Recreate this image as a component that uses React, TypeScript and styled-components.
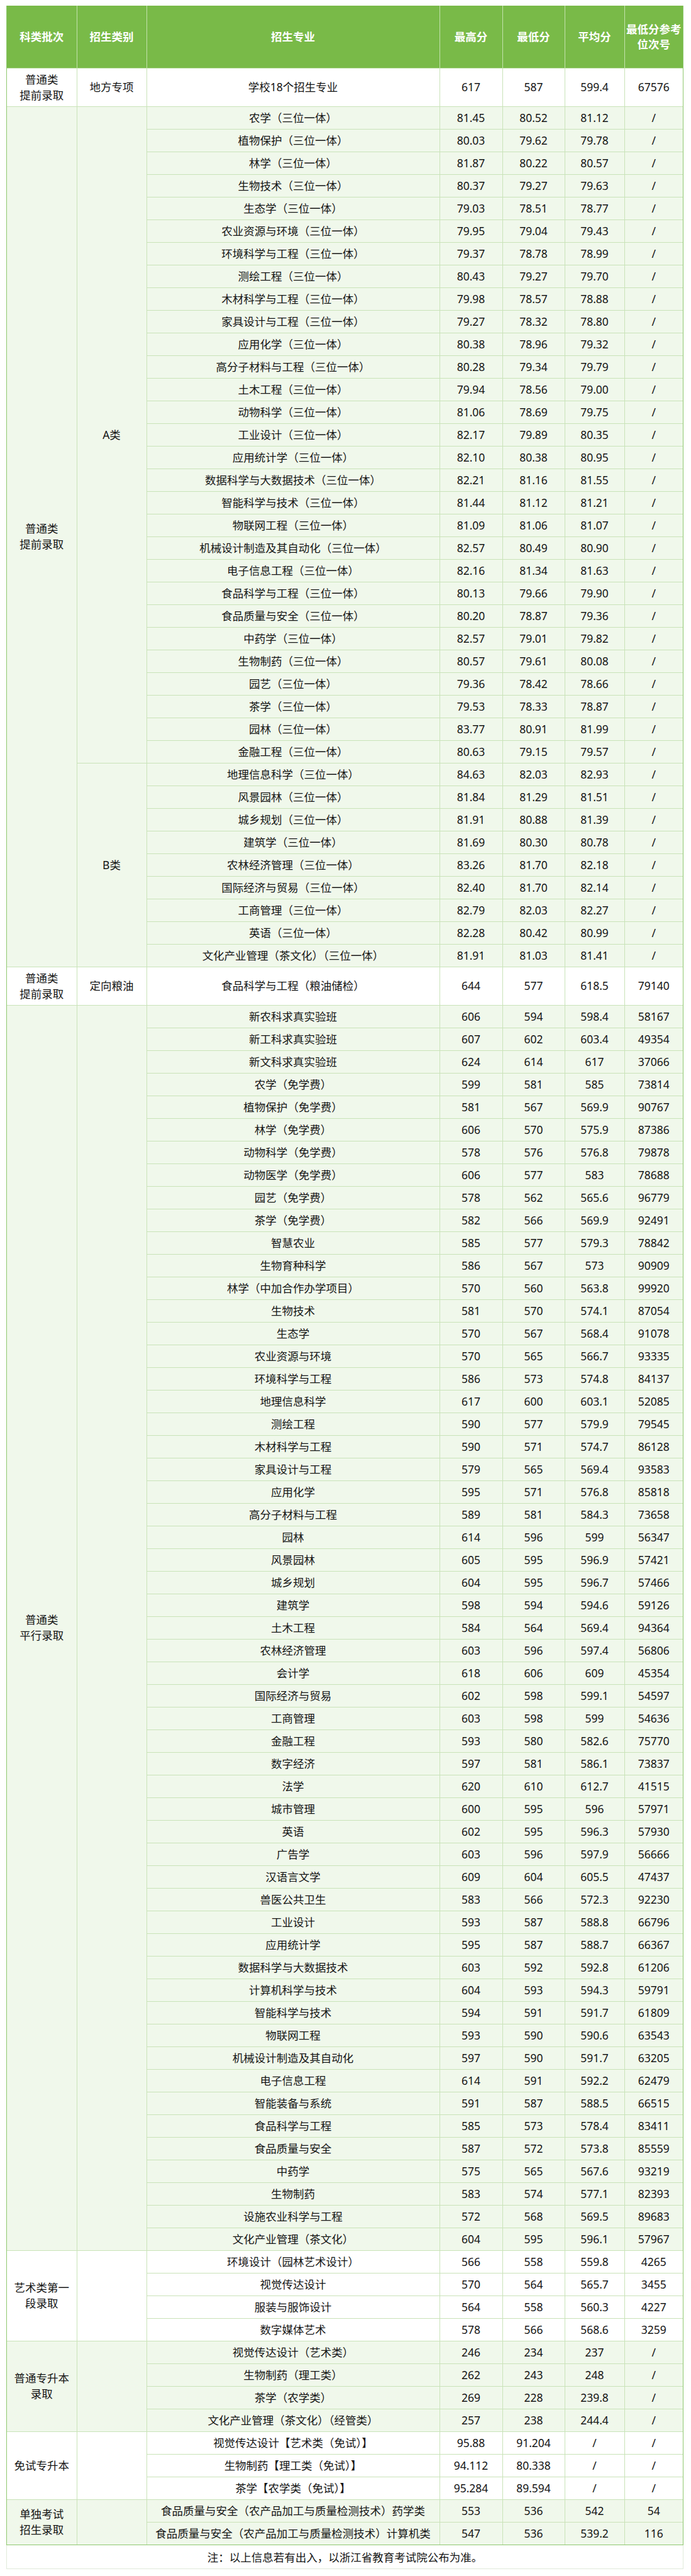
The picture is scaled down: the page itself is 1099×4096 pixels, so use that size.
import React from 'react';
import styled, { createGlobalStyle } from 'styled-components';

type Row = [string, string, string, string, string];

type Sub = {
  label: string;
  rows: Row[];
};

type Group = {
  batch: string[];
  subs: Sub[];
};

const T = '（三位一体）';

// [专业, 最高分, 最低分, 平均分, 位次号]
const aRows: Row[] = [
  ['农学' + T, '81.45', '80.52', '81.12', '/'],
  ['植物保护' + T, '80.03', '79.62', '79.78', '/'],
  ['林学' + T, '81.87', '80.22', '80.57', '/'],
  ['生物技术' + T, '80.37', '79.27', '79.63', '/'],
  ['生态学' + T, '79.03', '78.51', '78.77', '/'],
  ['农业资源与环境' + T, '79.95', '79.04', '79.43', '/'],
  ['环境科学与工程' + T, '79.37', '78.78', '78.99', '/'],
  ['测绘工程' + T, '80.43', '79.27', '79.70', '/'],
  ['木材科学与工程' + T, '79.98', '78.57', '78.88', '/'],
  ['家具设计与工程' + T, '79.27', '78.32', '78.80', '/'],
  ['应用化学' + T, '80.38', '78.96', '79.32', '/'],
  ['高分子材料与工程' + T, '80.28', '79.34', '79.79', '/'],
  ['土木工程' + T, '79.94', '78.56', '79.00', '/'],
  ['动物科学' + T, '81.06', '78.69', '79.75', '/'],
  ['工业设计' + T, '82.17', '79.89', '80.35', '/'],
  ['应用统计学' + T, '82.10', '80.38', '80.95', '/'],
  ['数据科学与大数据技术' + T, '82.21', '81.16', '81.55', '/'],
  ['智能科学与技术' + T, '81.44', '81.12', '81.21', '/'],
  ['物联网工程' + T, '81.09', '81.06', '81.07', '/'],
  ['机械设计制造及其自动化' + T, '82.57', '80.49', '80.90', '/'],
  ['电子信息工程' + T, '82.16', '81.34', '81.63', '/'],
  ['食品科学与工程' + T, '80.13', '79.66', '79.90', '/'],
  ['食品质量与安全' + T, '80.20', '78.87', '79.36', '/'],
  ['中药学' + T, '82.57', '79.01', '79.82', '/'],
  ['生物制药' + T, '80.57', '79.61', '80.08', '/'],
  ['园艺' + T, '79.36', '78.42', '78.66', '/'],
  ['茶学' + T, '79.53', '78.33', '78.87', '/'],
  ['园林' + T, '83.77', '80.91', '81.99', '/'],
  ['金融工程' + T, '80.63', '79.15', '79.57', '/'],
];

const bRows: Row[] = [
  ['地理信息科学' + T, '84.63', '82.03', '82.93', '/'],
  ['风景园林' + T, '81.84', '81.29', '81.51', '/'],
  ['城乡规划' + T, '81.91', '80.88', '81.39', '/'],
  ['建筑学' + T, '81.69', '80.30', '80.78', '/'],
  ['农林经济管理' + T, '83.26', '81.70', '82.18', '/'],
  ['国际经济与贸易' + T, '82.40', '81.70', '82.14', '/'],
  ['工商管理' + T, '82.79', '82.03', '82.27', '/'],
  ['英语' + T, '82.28', '80.42', '80.99', '/'],
  ['文化产业管理（茶文化）' + T, '81.91', '81.03', '81.41', '/'],
];

const parallelRows: Row[] = [
  ['新农科求真实验班', '606', '594', '598.4', '58167'],
  ['新工科求真实验班', '607', '602', '603.4', '49354'],
  ['新文科求真实验班', '624', '614', '617', '37066'],
  ['农学（免学费）', '599', '581', '585', '73814'],
  ['植物保护（免学费）', '581', '567', '569.9', '90767'],
  ['林学（免学费）', '606', '570', '575.9', '87386'],
  ['动物科学（免学费）', '578', '576', '576.8', '79878'],
  ['动物医学（免学费）', '606', '577', '583', '78688'],
  ['园艺（免学费）', '578', '562', '565.6', '96779'],
  ['茶学（免学费）', '582', '566', '569.9', '92491'],
  ['智慧农业', '585', '577', '579.3', '78842'],
  ['生物育种科学', '586', '567', '573', '90909'],
  ['林学（中加合作办学项目）', '570', '560', '563.8', '99920'],
  ['生物技术', '581', '570', '574.1', '87054'],
  ['生态学', '570', '567', '568.4', '91078'],
  ['农业资源与环境', '570', '565', '566.7', '93335'],
  ['环境科学与工程', '586', '573', '574.8', '84137'],
  ['地理信息科学', '617', '600', '603.1', '52085'],
  ['测绘工程', '590', '577', '579.9', '79545'],
  ['木材科学与工程', '590', '571', '574.7', '86128'],
  ['家具设计与工程', '579', '565', '569.4', '93583'],
  ['应用化学', '595', '571', '576.8', '85818'],
  ['高分子材料与工程', '589', '581', '584.3', '73658'],
  ['园林', '614', '596', '599', '56347'],
  ['风景园林', '605', '595', '596.9', '57421'],
  ['城乡规划', '604', '595', '596.7', '57466'],
  ['建筑学', '598', '594', '594.6', '59126'],
  ['土木工程', '584', '564', '569.4', '94364'],
  ['农林经济管理', '603', '596', '597.4', '56806'],
  ['会计学', '618', '606', '609', '45354'],
  ['国际经济与贸易', '602', '598', '599.1', '54597'],
  ['工商管理', '603', '598', '599', '54636'],
  ['金融工程', '593', '580', '582.6', '75770'],
  ['数字经济', '597', '581', '586.1', '73837'],
  ['法学', '620', '610', '612.7', '41515'],
  ['城市管理', '600', '595', '596', '57971'],
  ['英语', '602', '595', '596.3', '57930'],
  ['广告学', '603', '596', '597.9', '56666'],
  ['汉语言文学', '609', '604', '605.5', '47437'],
  ['兽医公共卫生', '583', '566', '572.3', '92230'],
  ['工业设计', '593', '587', '588.8', '66796'],
  ['应用统计学', '595', '587', '588.7', '66367'],
  ['数据科学与大数据技术', '603', '592', '592.8', '61206'],
  ['计算机科学与技术', '604', '593', '594.3', '59791'],
  ['智能科学与技术', '594', '591', '591.7', '61809'],
  ['物联网工程', '593', '590', '590.6', '63543'],
  ['机械设计制造及其自动化', '597', '590', '591.7', '63205'],
  ['电子信息工程', '614', '591', '592.2', '62479'],
  ['智能装备与系统', '591', '587', '588.5', '66515'],
  ['食品科学与工程', '585', '573', '578.4', '83411'],
  ['食品质量与安全', '587', '572', '573.8', '85559'],
  ['中药学', '575', '565', '567.6', '93219'],
  ['生物制药', '583', '574', '577.1', '82393'],
  ['设施农业科学与工程', '572', '568', '569.5', '89683'],
  ['文化产业管理（茶文化）', '604', '595', '596.1', '57967'],
];

const groups: Group[] = [
  {
    batch: ['普通类', '提前录取'],
    subs: [{ label: '地方专项', rows: [['学校18个招生专业', '617', '587', '599.4', '67576']] }],
  },
  {
    batch: ['普通类', '提前录取'],
    subs: [
      { label: 'A类', rows: aRows },
      { label: 'B类', rows: bRows },
    ],
  },
  {
    batch: ['普通类', '提前录取'],
    subs: [{ label: '定向粮油', rows: [['食品科学与工程（粮油储检）', '644', '577', '618.5', '79140']] }],
  },
  {
    batch: ['普通类', '平行录取'],
    subs: [{ label: '', rows: parallelRows }],
  },
  {
    batch: ['艺术类第一段录取'],
    subs: [
      {
        label: '',
        rows: [
          ['环境设计（园林艺术设计）', '566', '558', '559.8', '4265'],
          ['视觉传达设计', '570', '564', '565.7', '3455'],
          ['服装与服饰设计', '564', '558', '560.3', '4227'],
          ['数字媒体艺术', '578', '566', '568.6', '3259'],
        ],
      },
    ],
  },
  {
    batch: ['普通专升本录取'],
    subs: [
      {
        label: '',
        rows: [
          ['视觉传达设计（艺术类）', '246', '234', '237', '/'],
          ['生物制药（理工类）', '262', '243', '248', '/'],
          ['茶学（农学类）', '269', '228', '239.8', '/'],
          ['文化产业管理（茶文化）（经管类）', '257', '238', '244.4', '/'],
        ],
      },
    ],
  },
  {
    batch: ['免试专升本'],
    subs: [
      {
        label: '',
        rows: [
          ['视觉传达设计【艺术类（免试）】', '95.88', '91.204', '/', '/'],
          ['生物制药【理工类（免试）】', '94.112', '80.338', '/', '/'],
          ['茶学【农学类（免试）】', '95.284', '89.594', '/', '/'],
        ],
      },
    ],
  },
  {
    batch: ['单独考试', '招生录取'],
    subs: [
      {
        label: '',
        rows: [
          ['食品质量与安全（农产品加工与质量检测技术）药学类', '553', '536', '542', '54'],
          ['食品质量与安全（农产品加工与质量检测技术）计算机类', '547', '536', '539.2', '116'],
        ],
      },
    ],
  },
];

const colWidths = [111, 111, 466, 100, 99, 95, 93];

const GlobalStyle = createGlobalStyle`
  body {
    margin: 0;
    background: #fff;
    font-family: "Noto Sans", "Noto Sans CJK SC", sans-serif;
  }
`;

const Page = styled.div`
  padding: 9px 12px 0 10px;
`;

const Frame = styled.div`
  width: 1077px;
  box-sizing: border-box;
  border-left: 1px solid #8fc86f;
  border-right: 1px solid #8fc86f;
  border-bottom: 1px solid #8fc86f;
`;

const Table = styled.table`
  width: 100%;
  border-collapse: collapse;
  border-style: hidden;
  table-layout: fixed;
`;

const Col = styled.col<{ $w: number }>`
  width: ${(p) => p.$w}px;
`;

const HeadRow = styled.tr`
  height: 99px;
`;

const HeadCell = styled.th`
  background: #79ba48;
  color: #fff;
  font-weight: 700;
  font-size: 17.5px;
  line-height: 24px;
  padding: 0 2px;
  text-align: center;
  vertical-align: middle;
  border: 1px solid #c4e2ae;
`;

const Cell = styled.td<{ $shade: boolean }>`
  background: ${(p) => (p.$shade ? '#f0f8eb' : '#ffffff')};
  color: #141414;
  font-size: 17.5px;
  line-height: 25px;
  padding: 5px 3px;
  text-align: center;
  vertical-align: middle;
  border: 1px solid #c9e3b8;
`;

const Note = styled.div`
  width: 1077px;
  height: 38px;
  box-sizing: border-box;
  display: flex;
  align-items: center;
  justify-content: center;
  font-size: 17.5px;
  color: #141414;
  border: 1px solid #e0eada;
  border-top: none;
`;

const Lines = ({ parts }: { parts: string[] }) => (
  <>
    {parts.map((t, i) => (
      <React.Fragment key={i}>
        {i > 0 && <br />}
        {t}
      </React.Fragment>
    ))}
  </>
);

function App() {
  const body: React.ReactNode[] = [];

  groups.forEach((g, gi) => {
    const shade = gi % 2 === 1;
    const total = g.subs.reduce((n, s) => n + s.rows.length, 0);
    g.subs.forEach((s, si) => {
      s.rows.forEach((r, ri) => {
        body.push(
          <tr key={`${gi}-${si}-${ri}`}>
            {si === 0 && ri === 0 && (
              <Cell $shade={shade} rowSpan={total}>
                <Lines parts={g.batch} />
              </Cell>
            )}
            {ri === 0 && (
              <Cell $shade={shade} rowSpan={s.rows.length}>
                {s.label}
              </Cell>
            )}
            {r.map((v, ci) => (
              <Cell $shade={shade} key={ci}>
                {v}
              </Cell>
            ))}
          </tr>
        );
      });
    });
  });

  return (
    <Page>
      <GlobalStyle />
      <Frame>
        <Table>
          <colgroup>
            {colWidths.map((w, i) => (
              <Col key={i} $w={w} />
            ))}
          </colgroup>
          <thead>
            <HeadRow>
              <HeadCell>科类批次</HeadCell>
              <HeadCell>招生类别</HeadCell>
              <HeadCell>招生专业</HeadCell>
              <HeadCell>最高分</HeadCell>
              <HeadCell>最低分</HeadCell>
              <HeadCell>平均分</HeadCell>
              <HeadCell>
                最低分参考
                <br />
                位次号
              </HeadCell>
            </HeadRow>
          </thead>
          <tbody>{body}</tbody>
        </Table>
      </Frame>
      <Note>注：以上信息若有出入，以浙江省教育考试院公布为准。</Note>
    </Page>
  );
}

export default App;
